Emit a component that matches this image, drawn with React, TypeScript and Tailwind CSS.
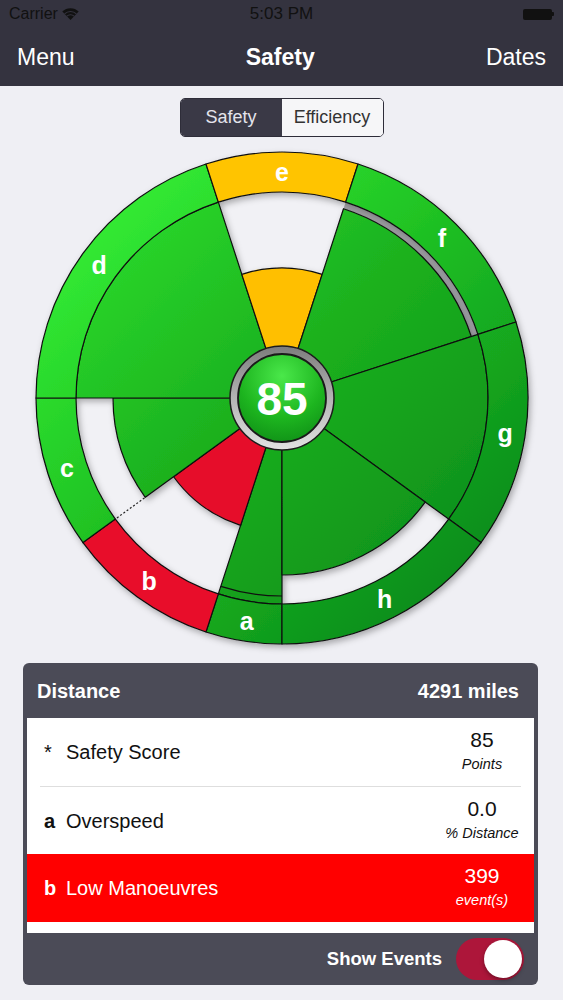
import React from 'react';

const CX = 260;
const CY = 260;
const RO = 246;
const RI = 206;

function pt(r: number, a: number): [number, number] {
  const t = (a * Math.PI) / 180;
  return [CX + r * Math.sin(t), CY - r * Math.cos(t)];
}

function sector(r0: number, r1: number, a0: number, a1: number): string {
  const large = a1 - a0 > 180 ? 1 : 0;
  const [x0, y0] = pt(r1, a0);
  const [x1, y1] = pt(r1, a1);
  if (r0 <= 0) {
    return `M ${CX} ${CY} L ${x0} ${y0} A ${r1} ${r1} 0 ${large} 1 ${x1} ${y1} Z`;
  }
  const [x2, y2] = pt(r0, a1);
  const [x3, y3] = pt(r0, a0);
  return `M ${x0} ${y0} A ${r1} ${r1} 0 ${large} 1 ${x1} ${y1} L ${x2} ${y2} A ${r0} ${r0} 0 ${large} 0 ${x3} ${y3} Z`;
}

function arcPath(r: number, a0: number, a1: number): string {
  const [x0, y0] = pt(r, a0);
  const [x1, y1] = pt(r, a1);
  return `M ${x0} ${y0} A ${r} ${r} 0 0 1 ${x1} ${y1}`;
}

type Seg = { l: string; a0: number; a1: number; w: number; kind: 'g' | 'r' | 'y' };

const segs: Seg[] = [
  { l: 'a', a0: 180, a1: 198, w: 206, kind: 'g' },
  { l: 'b', a0: 198, a1: 234, w: 134, kind: 'r' },
  { l: 'c', a0: 234, a1: 270, w: 169, kind: 'g' },
  { l: 'd', a0: 270, a1: 342, w: 206, kind: 'g' },
  { l: 'e', a0: 342, a1: 378, w: 130, kind: 'y' },
  { l: 'f', a0: 18, a1: 72, w: 199, kind: 'g' },
  { l: 'g', a0: 72, a1: 126, w: 206, kind: 'g' },
  { l: 'h', a0: 126, a1: 180, w: 177, kind: 'g' },
];

function ringFill(k: string) {
  if (k === 'r') return '#e8112b';
  if (k === 'y') return '#ffc402';
  return 'url(#gRing)';
}
function wedgeFill(k: string) {
  if (k === 'r') return '#e6102a';
  if (k === 'y') return '#ffbf00';
  return 'url(#gWedge)';
}

function Chart() {
  const stroke = '#101010';
  return (
    <svg width={520} height={520} viewBox="0 0 520 520" className="block mx-auto mt-[1px]">
      <defs>
        <linearGradient id="gRing" gradientUnits="userSpaceOnUse" x1="60" y1="40" x2="470" y2="480">
          <stop offset="0" stopColor="#36f236" />
          <stop offset="0.45" stopColor="#1fc123" />
          <stop offset="1" stopColor="#06831a" />
        </linearGradient>
        <linearGradient id="gWedge" gradientUnits="userSpaceOnUse" x1="60" y1="40" x2="470" y2="480">
          <stop offset="0" stopColor="#2ee22e" />
          <stop offset="0.45" stopColor="#1cb21f" />
          <stop offset="1" stopColor="#0a861a" />
        </linearGradient>
        <linearGradient id="metal" x1="0" y1="0" x2="0" y2="1">
          <stop offset="0" stopColor="#7c7c7c" />
          <stop offset="0.5" stopColor="#b4b4b4" />
          <stop offset="1" stopColor="#e2e2e2" />
        </linearGradient>
        <radialGradient id="ctr" cx="50%" cy="25%" r="80%">
          <stop offset="0" stopColor="#4ae84a" />
          <stop offset="0.6" stopColor="#1db51f" />
          <stop offset="1" stopColor="#0f8f16" />
        </radialGradient>
        <filter id="sh" x="-10%" y="-10%" width="125%" height="125%">
          <feDropShadow dx="2" dy="3" stdDeviation="3" floodColor="#000" floodOpacity="0.3" />
        </filter>
      </defs>

      {/* gaps */}
      {segs.map((s) =>
        s.w < RI ? (
          <path
            key={'gap' + s.l}
            d={sector(s.w, RI, s.a0, s.a1)}
            fill={s.l === 'f' ? '#a9a9ae' : '#f1f1f5'}
          />
        ) : null
      )}

      <g filter="url(#sh)">
        {segs.map((s) => (
          <path
            key={'w' + s.l}
            d={sector(0, s.w, s.a0, s.a1)}
            fill={wedgeFill(s.kind)}
            stroke={stroke}
            strokeWidth={1.2}
            strokeLinejoin="round"
          />
        ))}
        {segs.map((s) => (
          <path
            key={'r' + s.l}
            d={sector(RI, RO, s.a0, s.a1)}
            fill={ringFill(s.kind)}
            stroke={stroke}
            strokeWidth={1.2}
            strokeLinejoin="round"
          />
        ))}
      </g>

      {/* extra inner arc on a */}
      <path d={arcPath(198, 180, 198)} fill="none" stroke={stroke} strokeWidth={1.2} />
      {/* dotted boundary b/c */}
      <line
        x1={pt(170, 234)[0]}
        y1={pt(170, 234)[1]}
        x2={pt(205, 234)[0]}
        y2={pt(205, 234)[1]}
        stroke="#222"
        strokeWidth={1.2}
        strokeDasharray="2 2"
      />

      {/* labels */}
      {segs.map((s) => {
        const [x, y] = pt(226, (s.a0 + s.a1) / 2);
        return (
          <text
            key={'t' + s.l}
            x={x}
            y={y}
            fill="#ffffff"
            fontSize={25}
            fontWeight={700}
            fontFamily="'Liberation Sans', Arial, sans-serif"
            textAnchor="middle"
            dominantBaseline="central"
          >
            {s.l}
          </text>
        );
      })}

      {/* center */}
      <circle cx={CX} cy={CY} r={52} fill="url(#metal)" stroke="#1c1c1c" strokeWidth={1.5} />
      <circle cx={CX} cy={CY} r={44} fill="url(#ctr)" stroke="#1a1a1a" strokeWidth={1.8} />
      <text
        x={CX}
        y={CY + 1}
        fill="#ffffff"
        fontSize={46}
        fontWeight={700}
        fontFamily="'Liberation Sans', Arial, sans-serif"
        textAnchor="middle"
        dominantBaseline="central"
      >
        85
      </text>
    </svg>
  );
}

function Wifi() {
  return (
    <svg width="17" height="12" viewBox="0 0 17 12" className="ml-[4px]">
      <path d="M8.5 12 L0.3 3.6 A11.5 11.5 0 0 1 16.7 3.6 Z" fill="#111" />
      <path d="M2.6 5.9 A8.3 8.3 0 0 1 14.4 5.9" stroke="#34333f" strokeWidth="1.1" fill="none" />
      <path d="M4.9 8.2 A5.1 5.1 0 0 1 12.1 8.2" stroke="#34333f" strokeWidth="1.1" fill="none" />
    </svg>
  );
}

export default function App() {
  return (
    <div className="w-[563px] h-[1000px] bg-[#efeff4] flex flex-col font-['Liberation_Sans',Arial,sans-serif] overflow-hidden">
      {/* status bar */}
      <div className="h-[28px] bg-[#34333f] relative flex items-center px-[9px] text-[#111] text-[16px]">
        <span>Carrier</span>
        <Wifi />
        <span className="absolute left-0 right-0 text-center text-[17px] pointer-events-none">5:03 PM</span>
        <div className="ml-auto flex items-center">
          <div className="w-[29px] h-[11px] rounded-[2px] bg-[#111]" />
          <div className="w-[2px] h-[4px] bg-[#111] rounded-r-[1px]" />
        </div>
      </div>
      {/* nav bar */}
      <div className="h-[58px] bg-[#34333f] flex items-center justify-between px-[17px] text-white text-[23px]">
        <span>Menu</span>
        <span className="font-bold">Safety</span>
        <span>Dates</span>
      </div>

      {/* segmented control */}
      <div className="mt-[12px] mx-auto w-[204px] h-[39px] flex rounded-[5px] border border-[#2e2d39] overflow-hidden text-[18px]">
        <div className="w-[101px] bg-[#3a3946] text-[#e4e4ec] flex items-center justify-center">Safety</div>
        <div className="flex-1 bg-[#f6f6f8] text-[#333] flex items-center justify-center">Efficiency</div>
      </div>

      <Chart />

      {/* panel */}
      <div className="mt-[5px] ml-[23px] w-[515px] h-[322px] rounded-[6px] bg-[#4b4b57] px-[4px] flex flex-col">
        <div className="h-[55px] flex items-center justify-between pl-[10px] pr-[15px] text-white font-bold text-[20px]">
          <span>Distance</span>
          <span>4291 miles</span>
        </div>
        <div className="h-[215px] bg-white flex flex-col">
          <div className="h-[68px] flex items-center pl-[17px] pr-[12px] text-[#111]">
            <span className="w-[22px] text-[20px]">*</span>
            <span className="flex-1 text-[20px]">Safety Score</span>
            <div className="w-[80px] flex flex-col items-center leading-[24px]">
              <span className="text-[21px]">85</span>
              <span className="italic text-[14.5px]">Points</span>
            </div>
          </div>
          <div className="h-px bg-[#dedede] mx-[13px]" />
          <div className="h-[67px] flex items-center pl-[17px] pr-[12px] text-[#111]">
            <span className="w-[22px] text-[20px] font-bold">a</span>
            <span className="flex-1 text-[20px]">Overspeed</span>
            <div className="w-[80px] flex flex-col items-center leading-[24px]">
              <span className="text-[21px]">0.0</span>
              <span className="italic text-[14.5px] whitespace-nowrap">% Distance</span>
            </div>
          </div>
          <div className="h-[68px] bg-[#ff0000] flex items-center pl-[17px] pr-[12px] text-white">
            <span className="w-[22px] text-[20px] font-bold">b</span>
            <span className="flex-1 text-[20px]">Low Manoeuvres</span>
            <div className="w-[80px] flex flex-col items-center leading-[24px]">
              <span className="text-[21px]">399</span>
              <span className="italic text-[14.5px]">event(s)</span>
            </div>
          </div>
        </div>
        <div className="flex-1 flex items-center justify-end pr-[10px]">
          <span className="text-white font-bold text-[18.5px] mr-[14px]">Show Events</span>
          <div className="w-[68px] h-[42px] rounded-full bg-[#ad163a] flex items-center justify-end pr-[2px]">
            <div className="w-[38px] h-[38px] rounded-full bg-white shadow-[0_2px_4px_rgba(0,0,0,0.35)]" />
          </div>
        </div>
      </div>
    </div>
  );
}
